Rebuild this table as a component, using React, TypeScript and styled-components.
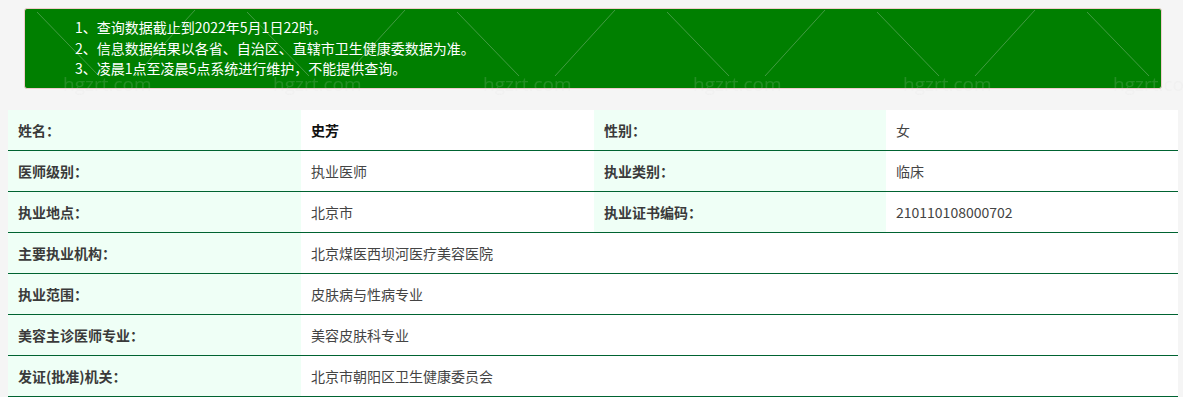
import React from 'react';
import styled, { createGlobalStyle } from 'styled-components';

const GlobalStyle = createGlobalStyle`
  html, body {
    margin: 0;
    padding: 0;
    background: #f5f5f5;
  }
  body {
    font-family: "Noto Sans CJK SC", "Noto Sans", sans-serif;
    font-size: 14px;
    color: #333;
  }
`;

const notices = [
  '1、查询数据截止到2022年5月1日22时。',
  '2、信息数据结果以各省、自治区、直辖市卫生健康委数据为准。',
  '3、凌晨1点至凌晨5点系统进行维护，不能提供查询。',
];

type Row = { label: string; value: string; label2?: string; value2?: string; strong?: boolean };

const rows: Row[] = [
  { label: '姓名：', value: '史芳', label2: '性别：', value2: '女', strong: true },
  { label: '医师级别：', value: '执业医师', label2: '执业类别：', value2: '临床' },
  { label: '执业地点：', value: '北京市', label2: '执业证书编码：', value2: '210110108000702' },
  { label: '主要执业机构：', value: '北京煤医西坝河医疗美容医院' },
  { label: '执业范围：', value: '皮肤病与性病专业' },
  { label: '美容主诊医师专业：', value: '美容皮肤科专业' },
  { label: '发证(批准)机关：', value: '北京市朝阳区卫生健康委员会' },
];

const Watermark = () => (
  <WatermarkLayer>
    <svg width="100%" height="100%">
      <defs>
        <pattern id="wm" x="37" y="0" width="210" height="400" patternUnits="userSpaceOnUse">
          <line x1="0" y1="12" x2="62" y2="76" stroke="rgba(220,220,220,0.3)" strokeWidth="1" />
          <line x1="98" y1="76" x2="158" y2="10" stroke="rgba(220,220,220,0.3)" strokeWidth="1" />
          <text
            x="26"
            y="91"
            fill="rgba(220,220,220,0.16)"
            fontSize="19"
            fontFamily="'Open Sans', sans-serif"
          >
            hgzrt.com
          </text>
        </pattern>
      </defs>
      <rect width="100%" height="100%" fill="url(#wm)" />
    </svg>
  </WatermarkLayer>
);

const App = () => {
  return (
    <>
      <GlobalStyle />
      <Page>
        <Notice>
          {notices.map((n) => (
            <NoticeLine key={n}>{n}</NoticeLine>
          ))}
        </Notice>
        <InfoTable>
          <colgroup>
            <col style={{ width: 293 }} />
            <col style={{ width: 293 }} />
            <col style={{ width: 292 }} />
            <col style={{ width: 292 }} />
          </colgroup>
          <tbody>
            {rows.map((r) => (
              <tr key={r.label}>
                <LabelCell>{r.label}</LabelCell>
                {r.label2 ? (
                  <>
                    <ValueCell $strong={r.strong}>{r.value}</ValueCell>
                    <LabelCell>{r.label2}</LabelCell>
                    <ValueCell>{r.value2}</ValueCell>
                  </>
                ) : (
                  <ValueCell colSpan={3}>{r.value}</ValueCell>
                )}
              </tr>
            ))}
          </tbody>
        </InfoTable>
        <Watermark />
      </Page>
    </>
  );
};

export default App;

const Page = styled.div`
  position: relative;
  width: 1183px;
  height: 397px;
  padding-top: 8px;
  box-sizing: border-box;
  overflow: hidden;
`;

const Notice = styled.div`
  width: 1138px;
  height: 81px;
  margin-left: 24px;
  box-sizing: border-box;
  padding: 8px 0 0 50px;
  background: #007f00;
  border: 1px solid #f0cccc;
  border-radius: 3px;
`;

const NoticeLine = styled.div`
  color: #ffffff;
  font-size: 14px;
  line-height: 20.5px;
`;

const InfoTable = styled.table`
  width: 1170px;
  margin: 21px 0 0 8px;
  border-collapse: collapse;
  table-layout: fixed;

  td {
    height: 40px;
    padding: 0 10px;
    border-bottom: 1px solid #006331;
    font-size: 14px;
    line-height: 18px;
    box-sizing: content-box;
  }
`;

const LabelCell = styled.td`
  background: #effff6;
  color: #3a3a3a;
  font-weight: 700;
`;

const ValueCell = styled.td<{ $strong?: boolean }>`
  background: #ffffff;
  color: ${(p) => (p.$strong ? '#111' : '#444')};
  font-weight: ${(p) => (p.$strong ? 700 : 400)};
`;

const WatermarkLayer = styled.div`
  position: absolute;
  inset: 0;
  pointer-events: none;
`;
